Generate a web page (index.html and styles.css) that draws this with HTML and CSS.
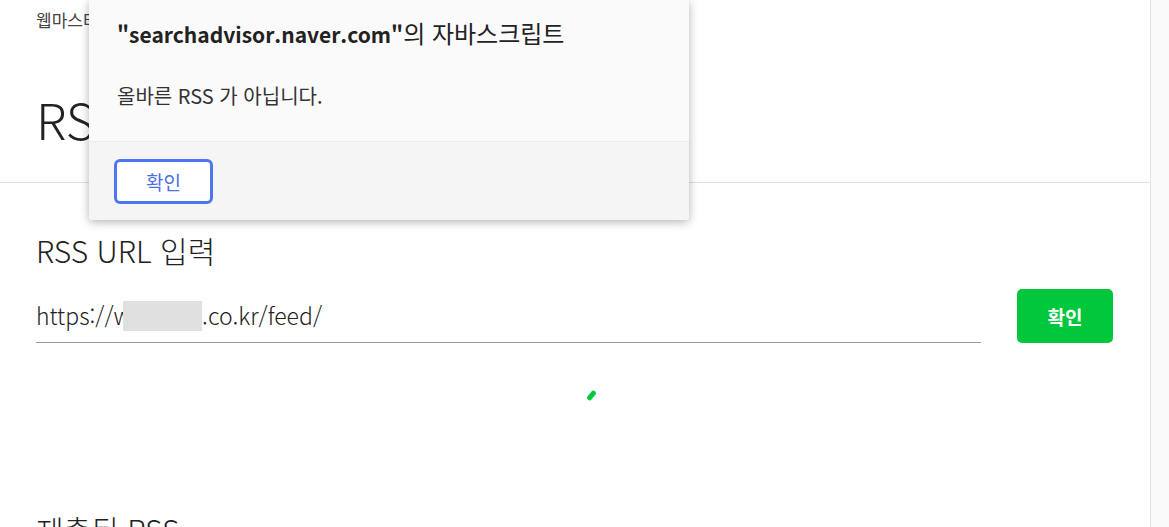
FILE: index.html
```html
<!DOCTYPE html>
<html lang="ko">

<head>
    <meta charset="UTF-8">
    <meta name="viewport" content="width=device-width, initial-scale=1.0">
    <title>RSS 제출</title>
    <link rel="stylesheet" href="styles.css">
</head>

<body>
    <div class="layout">
        <main class="content">
            <header class="page-head">
                <p class="breadcrumb">웹마스터 도구</p>
                <h1 class="page-title">RSS 제출</h1>
            </header>

            <section class="rss-form">
                <h2 class="section-title">RSS URL 입력</h2>
                <div class="form-row">
                    <div class="url-input">https://w<span class="blur"></span>.co.kr/feed/</div>
                    <button class="btn-submit">확인</button>
                </div>
                <div class="loader">
                    <span class="loader-dash"></span>
                </div>
                <h2 class="section-title">제출된 RSS</h2>
            </section>
        </main>
        <aside class="side"></aside>
    </div>

    <div class="alert">
        <div class="alert-body">
            <h3 class="alert-title"><b>"searchadvisor.naver.com"</b><span class="ko">의 자바스크립트</span></h3>
            <p class="alert-msg">올바른 RSS 가 아닙니다.</p>
        </div>
        <div class="alert-foot">
            <button class="alert-btn">확인</button>
        </div>
    </div>
</body>

</html>
```

FILE: styles.css
```css
body {
    margin: 0;
    font-family: "Noto Sans CJK KR", "Noto Sans", sans-serif;
    color: #222;
    background-color: #fff;
    overflow: hidden;
}

.layout {
    display: flex;
    min-height: 527px;
}

.content {
    width: 1150px;
    border-right: 1px solid #e3e3e3;
}

.side {
    flex: 1;
    background-color: #f9f9f9;
}

.page-head {
    height: 182px;
    padding-left: 36px;
    border-bottom: 1px solid #e0e0e0;
}

.breadcrumb {
    margin: 0;
    padding-top: 9px;
    font-size: 17px;
    line-height: 22px;
    color: #444;
}

.page-title {
    margin: 57px 0 0;
    font-size: 50px;
    line-height: 60px;
    font-weight: 300;
    color: #222;
}

.rss-form {
    padding: 0 37px 0 36px;
}

.section-title {
    margin: 49px 0 0;
    font-size: 30px;
    line-height: 36px;
    font-weight: 300;
    color: #222;
}

.form-row {
    display: flex;
    align-items: flex-start;
    gap: 36px;
    margin-top: 21px;
}

.url-input {
    flex: 1;
    height: 53px;
    line-height: 53px;
    font-size: 23px;
    font-weight: 300;
    color: #222;
    border-bottom: 1px solid #999;
    white-space: nowrap;
}

.blur {
    display: inline-block;
    width: 79px;
    height: 30px;
    margin-left: -8px;
    vertical-align: -6px;
    background-color: #e0e0e0;
}

.btn-submit {
    width: 96px;
    height: 54px;
    border: none;
    border-radius: 5px;
    background-color: #00c73c;
    color: #fff;
    font-family: inherit;
    font-size: 19px;
    font-weight: bold;
    cursor: pointer;
}

.loader {
    height: 121px;
    padding-top: 47px;
    display: flex;
    justify-content: center;
}

.loader-dash {
    width: 5px;
    height: 11px;
    border-radius: 3px;
    background-color: #00c73c;
    transform: translateX(17px) rotate(40deg);
}

.loader + .section-title {
    margin-top: 0;
}

.alert {
    position: absolute;
    top: 0;
    left: 89px;
    width: 600px;
    height: 220px;
    border-radius: 0 0 3px 3px;
    background-color: #fafafa;
    box-shadow: 0 2px 10px rgba(0, 0, 0, 0.3);
    overflow: hidden;
}

.alert-body {
    height: 141px;
    padding: 18px 0 0 28px;
    box-sizing: border-box;
}

.alert-title {
    margin: 0;
    font-size: 21px;
    line-height: 30px;
    font-weight: normal;
    color: #222;
}

.alert-title b {
    font-weight: 600;
}

.alert-title .ko {
    font-size: 24px;
}

.alert-msg {
    margin: 34px 0 0;
    font-size: 20px;
    line-height: 26px;
    color: #333;
}

.alert-foot {
    height: 79px;
    padding: 17px 0 0 25px;
    box-sizing: border-box;
    border-top: 1px solid #ececec;
    background-color: #f5f5f5;
}

.alert-btn {
    width: 99px;
    height: 45px;
    border: 3px solid #4d77f2;
    border-radius: 6px;
    background-color: #fff;
    color: #4a70e6;
    font-family: inherit;
    font-size: 19px;
    cursor: pointer;
}
```
